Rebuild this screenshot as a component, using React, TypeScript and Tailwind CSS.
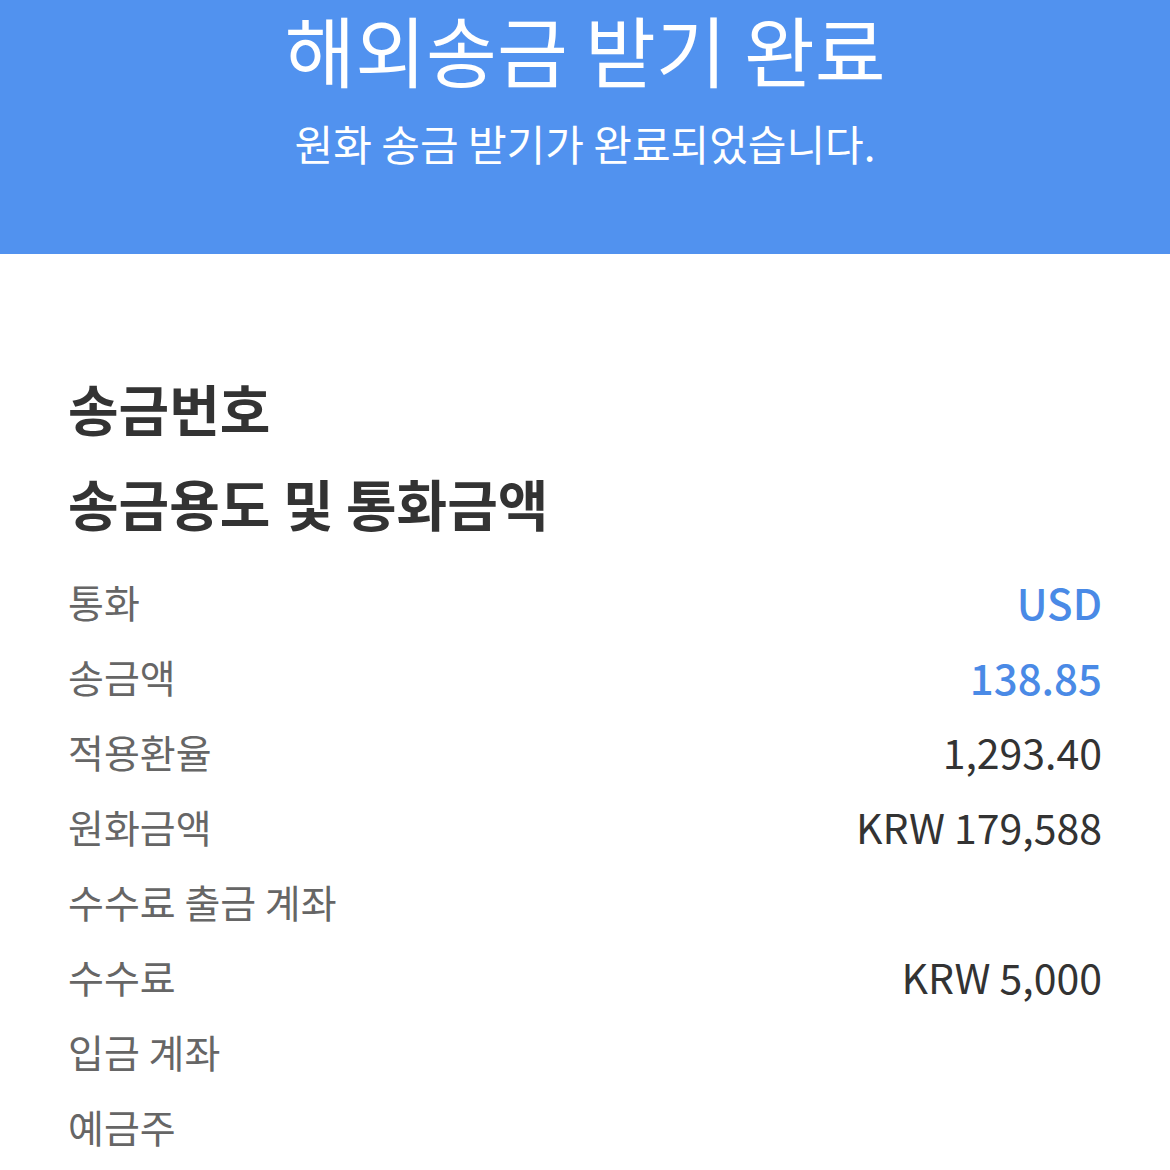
const rows: { label: string; value?: string; accent?: boolean }[] = [
  { label: "통화", value: "USD", accent: true },
  { label: "송금액", value: "138.85", accent: true },
  { label: "적용환율", value: "1,293.40" },
  { label: "원화금액", value: "KRW 179,588" },
  { label: "수수료 출금 계좌" },
  { label: "수수료", value: "KRW 5,000" },
  { label: "입금 계좌" },
  { label: "예금주" },
];

export default function App() {
  return (
    <div className="min-h-screen bg-white font-['Noto_Sans_CJK_KR',sans-serif]">
      <header className="flex h-[254px] flex-col items-center bg-[#5192ef] pt-[4px] text-white">
        <h1 className="text-[77px] leading-[90px] font-normal">해외송금 받기 완료</h1>
        <p className="text-[42px] leading-[98px]">원화 송금 받기가 완료되었습니다.</p>
      </header>

      <main className="px-[68px] pt-[106px]">
        <h2 className="text-[55px] leading-[95px] font-bold text-[#333]">송금번호</h2>
        <h2 className="text-[55px] leading-[95px] font-bold text-[#333]">송금용도 및 통화금액</h2>

        <dl className="mt-[14px]">
          {rows.map((r) => (
            <div key={r.label} className="flex items-center justify-between leading-[75px]">
              <dt className="text-[39px] text-[#666]">{r.label}</dt>
              <dd className={r.accent ? "text-[42px] font-medium text-[#4a8ae6]" : "text-[41px] text-[#333]"}>{r.value}</dd>
            </div>
          ))}
        </dl>
      </main>
    </div>
  );
}
